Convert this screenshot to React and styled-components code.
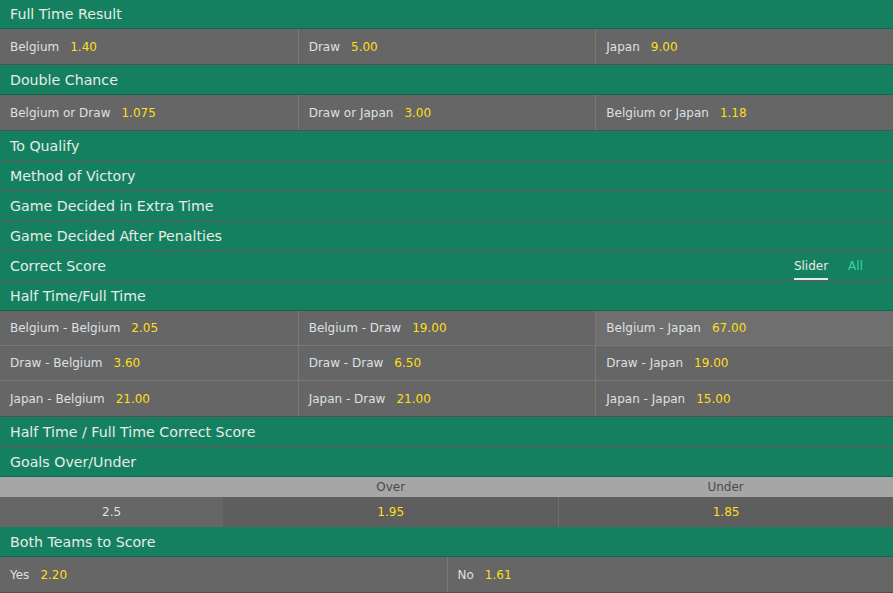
import React from "react";
import styled, { createGlobalStyle } from "styled-components";

const GlobalStyle = createGlobalStyle`
  body {
    margin: 0;
    background: #666666;
    font-family: "DejaVu Sans", "Liberation Sans", sans-serif;
  }
`;

const markets = [
  {
    title: "Full Time Result",
    cols: 3,
    rows: [
      [
        ["Belgium", "1.40"],
        ["Draw", "5.00"],
        ["Japan", "9.00"],
      ],
    ],
  },
  {
    title: "Double Chance",
    cols: 3,
    rows: [
      [
        ["Belgium or Draw", "1.075"],
        ["Draw or Japan", "3.00"],
        ["Belgium or Japan", "1.18"],
      ],
    ],
  },
  { title: "To Qualify" },
  { title: "Method of Victory" },
  { title: "Game Decided in Extra Time" },
  { title: "Game Decided After Penalties" },
  { title: "Correct Score", tabs: true },
  {
    title: "Half Time/Full Time",
    cols: 3,
    rows: [
      [
        ["Belgium - Belgium", "2.05"],
        ["Belgium - Draw", "19.00"],
        ["Belgium - Japan", "67.00", true],
      ],
      [
        ["Draw - Belgium", "3.60"],
        ["Draw - Draw", "6.50"],
        ["Draw - Japan", "19.00"],
      ],
      [
        ["Japan - Belgium", "21.00"],
        ["Japan - Draw", "21.00"],
        ["Japan - Japan", "15.00"],
      ],
    ],
  },
  { title: "Half Time / Full Time Correct Score" },
  { title: "Goals Over/Under", overUnder: true },
  {
    title: "Both Teams to Score",
    cols: 2,
    rows: [
      [
        ["Yes", "2.20"],
        ["No", "1.61"],
      ],
    ],
  },
];

const App = () => {
  return (
    <>
      <GlobalStyle />
      <Page>
        <Scroller>
          {markets.map((m) => (
            <Market key={m.title}>
              <Header $open={!!(m.rows || m.overUnder)}>
                <Title>{m.title}</Title>
                {m.tabs && (
                  <Tabs>
                    <Tab $active>Slider</Tab>
                    <Tab>All</Tab>
                  </Tabs>
                )}
              </Header>
              {m.rows && (
                <Grid $cols={m.cols}>
                  {m.rows.map((row, ri) =>
                    row.map(([label, odds, hl], ci) => (
                      <Cell
                        key={ri + "-" + ci}
                        $first={ci === 0}
                        $lastRow={ri === m.rows.length - 1}
                        $highlight={hl}
                      >
                        <Label>{label}</Label>
                        <Odds>{odds}</Odds>
                      </Cell>
                    ))
                  )}
                </Grid>
              )}
              {m.overUnder && (
                <>
                  <SubHead>
                    <span />
                    <span>Over</span>
                    <span>Under</span>
                  </SubHead>
                  <LineRow>
                    <LineCell>2.5</LineCell>
                    <PriceCell>
                      <Odds>1.95</Odds>
                    </PriceCell>
                    <PriceCell $divider>
                      <Odds>1.85</Odds>
                    </PriceCell>
                  </LineRow>
                </>
              )}
            </Market>
          ))}
        </Scroller>
      </Page>
    </>
  );
};

export default App;

const Page = styled.div`
  width: 893px;
  height: 593px;
  overflow: hidden;
  background: #666666;
`;

// list is scrolled by one pixel in the capture
const Scroller = styled.div`
  margin-top: -1px;
`;

const Market = styled.div`
  display: flex;
  flex-direction: column;
`;

const Header = styled.div`
  height: 29px;
  display: flex;
  align-items: center;
  justify-content: space-between;
  background: #15805f;
  border-bottom: 1px solid ${(p) => (p.$open ? "#0f6a4c" : "#6a5660")};
  padding: 0 10px;
`;

const Title = styled.div`
  color: #e6ece6;
  font-size: 14.2px;
`;

const Tabs = styled.div`
  display: flex;
  gap: 20px;
  margin-right: 20px;
  height: 100%;
`;

const Tab = styled.div`
  display: flex;
  align-items: center;
  font-size: 12px;
  color: ${(p) => (p.$active ? "#e8e8e8" : "#3bd6a2")};
  border-bottom: 2px solid ${(p) => (p.$active ? "#e8e8e8" : "transparent")};
  box-sizing: border-box;
  padding-top: 2px;
`;

const Grid = styled.div`
  display: grid;
  grid-template-columns: repeat(${(p) => p.$cols}, 1fr);
  border-bottom: 1px solid #4f4f4f;
`;

const Cell = styled.div`
  height: 35px;
  box-sizing: border-box;
  display: flex;
  align-items: center;
  gap: 11px;
  padding-left: 10px;
  background: ${(p) => (p.$highlight ? "#6f6f6f" : "#666666")};
  border-left: ${(p) => (p.$first ? "none" : "1px solid #787878")};
  border-bottom: ${(p) => (p.$lastRow ? "none" : "1px solid #787878")};
`;

const Label = styled.span`
  color: #dde0e4;
  font-size: 12px;
`;

const Odds = styled.span`
  color: #ffdf1b;
  font-size: 12px;
`;

const SubHead = styled.div`
  height: 20px;
  display: grid;
  grid-template-columns: 25% 37.5% 37.5%;
  background: #a6a6a6;
  color: #4a4a4a;
  font-size: 12px;
  align-items: center;
  text-align: center;
`;

const LineRow = styled.div`
  height: 30px;
  display: grid;
  grid-template-columns: 25% 37.5% 37.5%;
`;

const LineCell = styled.div`
  display: flex;
  align-items: center;
  justify-content: center;
  background: #666666;
  color: #dde0e4;
  font-size: 12px;
`;

const PriceCell = styled.div`
  display: flex;
  align-items: center;
  justify-content: center;
  background: #5e5e5e;
  border-left: ${(p) => (p.$divider ? "1px solid #6e6e6e" : "none")};
`;
